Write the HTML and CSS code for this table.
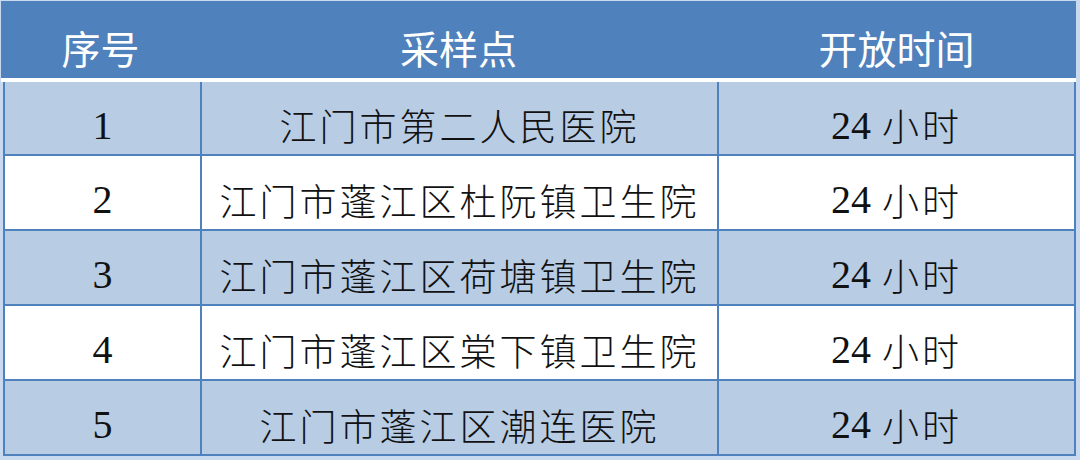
FILE: index.html
```html
<!DOCTYPE html>
<html lang="zh-CN">
<head>
<meta charset="utf-8">
<title>采样点</title>
<link rel="stylesheet" href="styles.css">
</head>
<body>
<div class="sheet">
  <div class="head">
    <div class="hcell">序号</div>
    <div class="hcell">采样点</div>
    <div class="hcell">开放时间</div>
  </div>
  <div class="grid">
    <div class="row row-first shade">
      <div class="cell"><span class="lat">1</span></div>
      <div class="cell">江门市第二人民医院</div>
      <div class="cell"><span class="lat">24</span> 小时</div>
    </div>
    <div class="row">
      <div class="cell"><span class="lat">2</span></div>
      <div class="cell">江门市蓬江区杜阮镇卫生院</div>
      <div class="cell"><span class="lat">24</span> 小时</div>
    </div>
    <div class="row shade">
      <div class="cell"><span class="lat">3</span></div>
      <div class="cell">江门市蓬江区荷塘镇卫生院</div>
      <div class="cell"><span class="lat">24</span> 小时</div>
    </div>
    <div class="row">
      <div class="cell"><span class="lat">4</span></div>
      <div class="cell">江门市蓬江区棠下镇卫生院</div>
      <div class="cell"><span class="lat">24</span> 小时</div>
    </div>
    <div class="row shade">
      <div class="cell"><span class="lat">5</span></div>
      <div class="cell">江门市蓬江区潮连医院</div>
      <div class="cell"><span class="lat">24</span> 小时</div>
    </div>
  </div>
</div>
</body>
</html>
```
FILE: styles.css
```css
html, body {
  margin: 0;
  padding: 0;
}
body {
  width: 1080px;
  height: 460px;
  background: #c9daf0;
  overflow: hidden;
}
.sheet {
  padding-top: 1px;
}
.head {
  margin-left: 1px;
  width: 1075px;
  height: 77px;
  background: #4f81bd;
  border-bottom: 4px solid #ffffff;
  display: grid;
  grid-template-columns: 199px 517px 1fr;
  color: #ffffff;
  font-family: "Noto Sans CJK SC", "Noto Sans", sans-serif;
  font-size: 39px;
  font-weight: 400;
}
.hcell {
  display: flex;
  align-items: center;
  justify-content: center;
  padding-top: 14px;
  letter-spacing: 0;
}
.grid {
  margin-left: 3px;
  width: 1073px;
  box-sizing: border-box;
  border-left: 2px solid #4f81bd;
  border-right: 2px solid #4f81bd;
  background: #ffffff;
}
.row {
  display: grid;
  grid-template-columns: 197px 517px 1fr;
  height: 73px;
  border-bottom: 2px solid #4f81bd;
  background: #ffffff;
}
.row-first {
  height: 72px;
}
.shade {
  background: #b8cce4;
}
.cell {
  display: flex;
  align-items: center;
  justify-content: center;
  padding-top: 14px;
  font-family: "Noto Sans CJK SC", sans-serif;
  font-size: 37px;
  font-weight: 300;
  letter-spacing: 3px;
  color: #111111;
  white-space: pre;
}
.cell:nth-child(1), .cell:nth-child(2) {
  border-right: 2px solid #4f81bd;
}
.lat {
  font-family: "Liberation Serif", "Times New Roman", Tinos, "DejaVu Serif", serif;
  font-size: 40px;
  font-weight: 400;
  letter-spacing: 0;
}
```
